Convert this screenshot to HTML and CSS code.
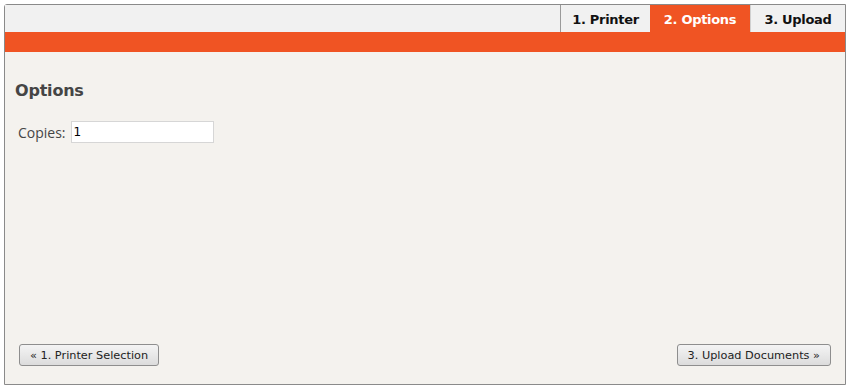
FILE: index.html
```html
<!DOCTYPE html>
<html>
<head>
<meta charset="utf-8">
<link rel="stylesheet" href="styles.css">
</head>
<body>
<div class="frame">
  <div class="header">
    <div class="tabs">
      <div class="tab t1">1. Printer</div>
      <div class="tab t2 active">2. Options</div>
      <div class="tab t3">3. Upload</div>
    </div>
  </div>
  <div class="bar"></div>
  <div class="content">
    <h2 class="title">Options</h2>
    <div class="field">
      <label class="label">Copies:</label>
      <input class="input" type="text" value="1">
    </div>
  </div>
  <div class="footer">
    <button class="btn">« 1. Printer Selection</button>
    <button class="btn">3. Upload Documents »</button>
  </div>
</div>
</body>
</html>
```
FILE: styles.css
```css
html, body { margin: 0; padding: 0; background: #ffffff; }
body { padding: 4px 4px 0 4px; }
.frame {
  width: 840px;
  height: 379px;
  border: 1px solid #8a8a8a;
  border-top-left-radius: 3px;
  background: #f4f2ee;
  display: flex;
  flex-direction: column;
}
.header {
  height: 27px;
  background: #f1f1f1;
  display: flex;
  justify-content: flex-end;
}
.tabs { display: flex; }
.tab {
  font-family: "DejaVu Sans", sans-serif;
  font-weight: bold;
  font-size: 13px;
  color: #111;
  display: flex;
  align-items: center;
  justify-content: center;
  height: 27px;
  padding-top: 1px;
  box-sizing: border-box;
  letter-spacing: -0.3px;
}
.t1 { width: 90px; border-left: 1px solid #9a9a9a; }
.t2 { width: 100px; }
.t3 { width: 95px; border-left: 1px solid #d0d0d0; }
.tab.active { background: #f05423; color: #fff; }
.bar { height: 20px; background: #f05423; }
.content { flex: 1; padding: 29px 10px 0 10px; }
.title {
  margin: 0 0 21px 0;
  font-family: "DejaVu Sans", sans-serif;
  font-weight: bold;
  font-size: 16px;
  color: #454545;
  letter-spacing: -0.2px;
}
.field { display: flex; align-items: center; padding-left: 3px; }
.label {
  font-family: "Open Sans", sans-serif;
  font-size: 14px;
  color: #454545;
  margin-right: 5px;
}
.input {
  width: 137px;
  height: 18px;
  border: 1px solid #d6d6d6;
  padding: 1px 2px;
  font-family: "DejaVu Sans", sans-serif;
  font-size: 12px;
  color: #000;
  background: #fff;
  margin: 0;
}
.footer {
  display: flex;
  justify-content: space-between;
  padding: 0 14px 18px 14px;
}
.btn {
  font-family: "DejaVu Sans", sans-serif;
  font-size: 11.3px;
  color: #222;
  height: 22px;
  padding: 0 10px;
  border: 1px solid #8e8e8e;
  border-radius: 3px;
  background: linear-gradient(#f4f4f4, #dcdcdc);
  margin: 0;
}
```
